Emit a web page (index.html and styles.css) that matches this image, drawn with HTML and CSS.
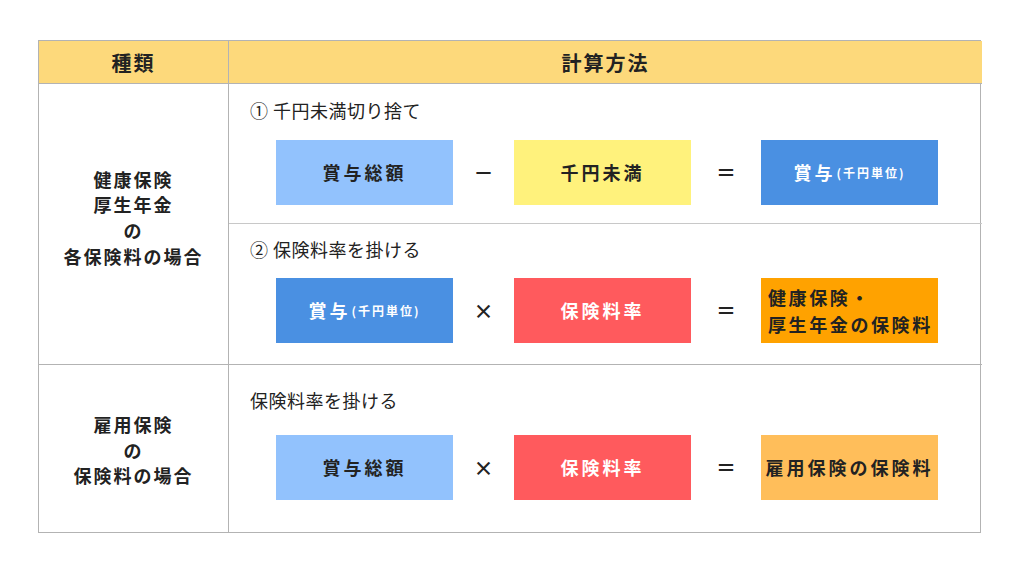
FILE: index.html
```html
<!DOCTYPE html>
<html lang="ja">
<head>
<meta charset="utf-8">
<link rel="stylesheet" href="styles.css">
</head>
<body>
<div class="table">
  <div class="th th-left">種類</div>
  <div class="th th-right">計算方法</div>

  <div class="kind kind-1">健康保険<br>厚生年金<br>の<br>各保険料の場合</div>
  <div class="calc calc-1">
    <div class="step step-a">
      <div class="label">① 千円未満切り捨て</div>
      <div class="formula">
        <div class="box lightblue">賞与総額</div>
        <div class="op">－</div>
        <div class="box yellow">千円未満</div>
        <div class="op">＝</div>
        <div class="box blue white">賞与<span class="small">(千円単位)</span></div>
      </div>
    </div>
    <div class="step step-b">
      <div class="label">② 保険料率を掛ける</div>
      <div class="formula">
        <div class="box blue white">賞与<span class="small">(千円単位)</span></div>
        <div class="op">×</div>
        <div class="box red white">保険料率</div>
        <div class="op">＝</div>
        <div class="box orange left">健康保険・<br>厚生年金の保険料</div>
      </div>
    </div>
  </div>

  <div class="kind kind-2">雇用保険<br>の<br>保険料の場合</div>
  <div class="calc calc-2">
    <div class="step step-c">
      <div class="label">保険料率を掛ける</div>
      <div class="formula">
        <div class="box lightblue">賞与総額</div>
        <div class="op">×</div>
        <div class="box red white">保険料率</div>
        <div class="op">＝</div>
        <div class="box lightorange">雇用保険の保険料</div>
      </div>
    </div>
  </div>
</div>
</body>
</html>
```
FILE: styles.css
```css
html, body {
  margin: 0;
  padding: 0;
  background: #ffffff;
}
body {
  font-family: "Noto Sans CJK JP", "Noto Sans", sans-serif;
  color: #222;
  padding: 40px 0 0 38px;
}
.table {
  width: 943px;
  display: grid;
  grid-template-columns: 190px 753px;
  grid-template-rows: 43px 281px 167px;
  border: 1px solid #b3b3b3;
  box-sizing: border-box;
}
.th {
  background: #fdd97b;
  font-weight: 700;
  font-size: 20px;
  letter-spacing: 2px;
  display: flex;
  align-items: center;
  justify-content: center;
  border-bottom: 1px solid #b3b3b3;
  color: #222;
}
.th-left, .kind {
  border-right: 1px solid #b3b3b3;
}
.kind {
  display: flex;
  align-items: center;
  justify-content: center;
  text-align: center;
  font-weight: 700;
  font-size: 18px;
  line-height: 25.7px;
  letter-spacing: 2px;
}
.kind-1 {
  border-bottom: 1px solid #b3b3b3;
  padding-bottom: 12px;
}
.kind-2 {
  padding-top: 4px;
}
.calc-1 {
  display: flex;
  flex-direction: column;
  border-bottom: 1px solid #b3b3b3;
}
.step {
  display: flex;
  flex-direction: column;
  padding-left: 21px;
}
.step-a {
  height: 140px;
  box-sizing: border-box;
  padding-top: 14px;
  border-bottom: 1px solid #c8c8c8;
}
.step-b {
  padding-top: 13px;
}
.step-c {
  padding-top: 23px;
}
.label {
  font-size: 18px;
  line-height: 24px;
  letter-spacing: 0.5px;
  color: #222;
}
.formula {
  display: flex;
  align-items: center;
  margin-left: 26px;
  margin-top: 18px;
}
.step-b .formula { margin-top: 17px; }
.step-c .formula { margin-top: 23px; }
.box {
  width: 177px;
  height: 65px;
  display: flex;
  align-items: center;
  justify-content: center;
  font-weight: 700;
  font-size: 18px;
  letter-spacing: 3px;
  color: #222;
  line-height: 27px;
}
.box.left {
  justify-content: flex-start;
  padding-left: 7px;
  box-sizing: border-box;
  letter-spacing: 2.6px;
}
.white { color: #fff; }
.small {
  font-size: 12px;
  letter-spacing: 2px;
  font-weight: 700;
  margin-left: 1px;
}
.lightblue { background: #92c2fd; }
.yellow { background: #fff27c; }
.blue { background: #4a90e2; }
.red { background: #ff5a5d; }
.orange { background: #ffa200; }
.lightorange { background: #ffbe5a; }
.op {
  width: 61px;
  text-align: center;
  font-size: 20px;
  font-weight: 700;
  color: #222;
}
.op:nth-child(4) { width: 70px; }
```
